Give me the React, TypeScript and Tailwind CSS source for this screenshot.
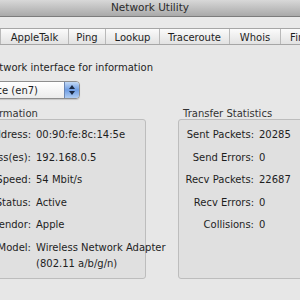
import React from "react";

const font = { fontFamily: '"DejaVu Sans", "Lucida Grande", sans-serif' };

function Row({ label, value, labelW, extra }: { label: string; value: string; labelW: string; extra?: string }) {
  return (
    <div className="flex items-start h-[22.5px]">
      <div className={`${labelW} text-right shrink-0`}>{label}</div>
      <div className="pl-[5px] whitespace-nowrap">
        <div>{value}</div>
        {extra && <div className="leading-[17px]">{extra}</div>}
      </div>
    </div>
  );
}

export default function App() {
  const tabs = [
    { t: "Info", w: "w-[80px]" },
    { t: "AppleTalk", w: "w-[68px]" },
    { t: "Ping", w: "w-[37px]" },
    { t: "Lookup", w: "w-[54px]" },
    { t: "Traceroute", w: "w-[70px]" },
    { t: "Whois", w: "w-[51px]" },
    { t: "Finger", w: "w-[50px]" },
  ];
  return (
    <div className="w-[300px] h-[300px] overflow-hidden bg-[#e7e7e7] text-[10px] text-[#1e1e1e]" style={font}>
      {/* title bar */}
      <div className="h-[17px] bg-gradient-to-b from-[#d8d8d8] to-[#a9a9a9] border-b border-[#7c7c7c] flex items-center justify-center text-[#2b2b2b] text-[10.5px]">
        Network Utility
      </div>
      {/* toolbar strip */}
      <div className="h-[11px] bg-[#e9e9e9]" />
      {/* tabs */}
      <div className="h-[17px] ml-[-80px] flex bg-gradient-to-b from-[#fbfbfb] to-[#e2e2e2] border-y border-[#a6a6a6]">
        {tabs.map((x, i) => (
          <div
            key={x.t}
            className={`${x.w} shrink-0 flex items-center justify-center pt-[1px] ${i > 0 ? "border-l border-[#b9b9b9]" : ""}`}
          >
            {x.t}
          </div>
        ))}
      </div>
      {/* body */}
      <div className="ml-[-80px] w-[400px]">
        <div className="w-[233px] text-right mt-[15px] whitespace-nowrap">
          Select a network interface for information
        </div>
        <div className="mt-[6px] ml-[10px] w-[150px] h-[18px] flex rounded-[4px] border border-[#8e8e8e] bg-gradient-to-b from-[#ffffff] to-[#ececec] shadow-[0_1px_1px_rgba(0,0,0,0.15)] overflow-hidden">
          <div className="flex-1 min-w-0 overflow-hidden flex items-center justify-end pr-[26px] whitespace-nowrap">Ethernet Interface (en7)</div>
          <div className="w-[15px] shrink-0 bg-gradient-to-b from-[#c3d9f5] via-[#6f9de3] to-[#b0cdf2] border-l border-[#6b86b3] flex flex-col items-center justify-center gap-[2px]">
            <svg width="6" height="4" viewBox="0 0 6 4"><path d="M0 4 L3 0 L6 4 Z" fill="#1b2a44" /></svg>
            <svg width="6" height="4" viewBox="0 0 6 4"><path d="M0 0 L3 4 L6 0 Z" fill="#1b2a44" /></svg>
          </div>
        </div>
        {/* groups */}
        <div className="flex mt-[9px]">
          <div className="w-[219px] ml-[7px] flex flex-col">
            <div className="h-[12px] leading-[12px] pl-[5px] text-[#333]">Interface Information</div>
            <div className="mt-[-1px] h-[160px] rounded-[3px] border border-[#bdbdbd] bg-[#e0e0e0] pt-[7px]">
              <Row labelW="w-[103px]" label="Hardware Address:" value="00:90:fe:8c:14:5e" />
              <Row labelW="w-[103px]" label="IP Address(es):" value="192.168.0.5" />
              <Row labelW="w-[103px]" label="Link Speed:" value="54 Mbit/s" />
              <Row labelW="w-[103px]" label="Link Status:" value="Active" />
              <Row labelW="w-[103px]" label="Vendor:" value="Apple" />
              <Row labelW="w-[103px]" label="Model:" value="Wireless Network Adapter" extra="(802.11 a/b/g/n)" />
            </div>
          </div>
          <div className="w-[135px] ml-[32px] flex flex-col">
            <div className="h-[12px] leading-[12px] pl-[5px] text-[#333] whitespace-nowrap">Transfer Statistics</div>
            <div className="mt-[-1px] h-[160px] rounded-[3px] border border-[#bdbdbd] bg-[#e0e0e0] pt-[7px]">
              <Row labelW="w-[75px]" label="Sent Packets:" value="20285" />
              <Row labelW="w-[75px]" label="Send Errors:" value="0" />
              <Row labelW="w-[75px]" label="Recv Packets:" value="22687" />
              <Row labelW="w-[75px]" label="Recv Errors:" value="0" />
              <Row labelW="w-[75px]" label="Collisions:" value="0" />
            </div>
          </div>
        </div>
      </div>
    </div>
  );
}
